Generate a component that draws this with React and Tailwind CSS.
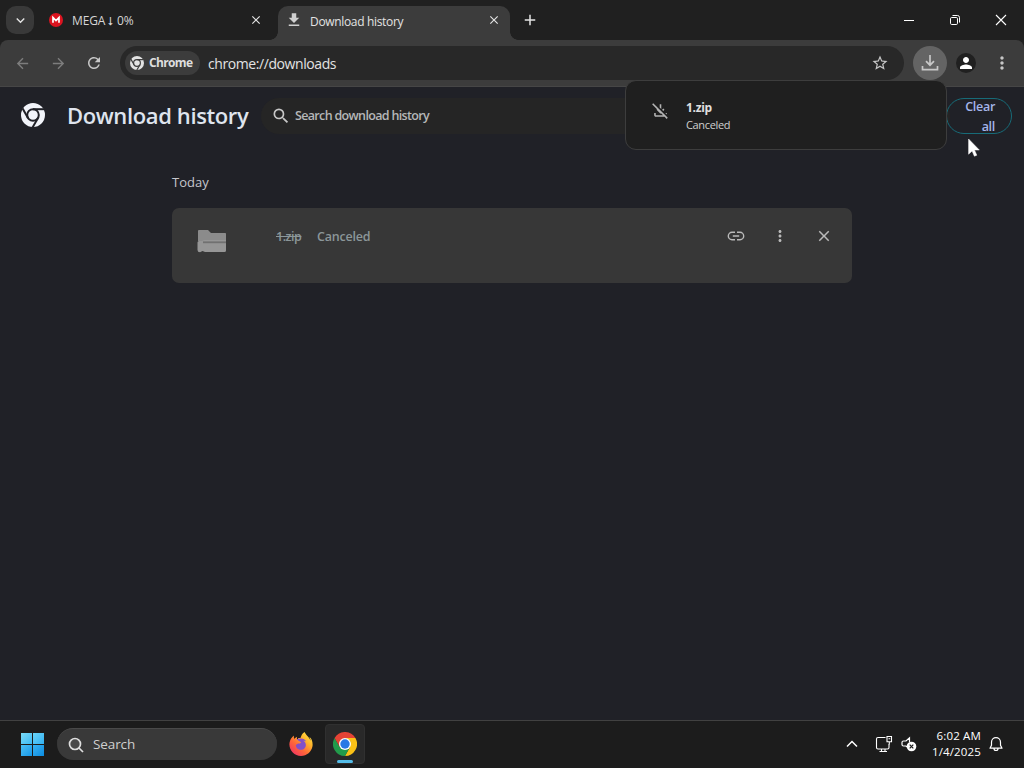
import React from "react";
import {
  MdRefresh, MdArrowBack, MdArrowForward, MdMoreVert, MdSearch, MdStarBorder,
  MdPerson, MdClose, MdAdd, MdKeyboardArrowDown, MdFileDownload, MdOutlineFileDownloadOff,
} from "react-icons/md";
import { SiFirefoxbrowser } from "react-icons/si";

function ChromeMark({ size, color, gap }) {
  return (
    <svg width={size} height={size} viewBox="0 0 24 24" className="shrink-0">
      <circle cx="12" cy="12" r="12" fill={color} />
      <g stroke={gap} strokeWidth="2" fill="none">
        <circle cx="12" cy="12" r="5.8" />
        <path d="M12 6.2h11" />
        <path d="M12 6.2h11" transform="rotate(120 12 12)" />
        <path d="M12 6.2h11" transform="rotate(240 12 12)" />
      </g>
    </svg>
  );
}

function MegaLogo() {
  return (
    <svg width="14" height="14" viewBox="0 0 14 14">
      <circle cx="7" cy="7" r="7" fill="#dc1420" />
      <path d="M4 9.8V4.6l3 3 3-3v5.2" fill="none" stroke="#fff" strokeWidth="1.7" />
    </svg>
  );
}

function TabStrip() {
  return (
    <div className="flex h-10 shrink-0 items-center bg-[#202020] pl-[6px] text-[#e3e3e3]">
      <button className="flex h-7 w-7 items-center justify-center rounded-[10px] bg-[#393939]">
        <MdKeyboardArrowDown size={17} />
      </button>
      <div className="ml-[15px] flex w-[229px] items-center">
        <MegaLogo />
        <span className="ml-[9px] grow whitespace-nowrap pt-[1px] text-[12px] tracking-[-0.15px] text-[#d6d6d6]">MEGA ⭣ 0%</span>
        <MdClose size={14} className="mr-[15px]" />
      </div>
      <div className="relative mt-[6px] flex h-[34px] w-[232px] items-center rounded-t-[10px] bg-[#3c3c3c] pb-[6px] pl-[7px]">
        <span className="absolute -left-2 bottom-0 h-2 w-2 bg-[radial-gradient(circle_at_top_left,#202020_7.5px,#3c3c3c_8px)]" />
        <span className="absolute -right-2 bottom-0 h-2 w-2 bg-[radial-gradient(circle_at_top_right,#202020_7.5px,#3c3c3c_8px)]" />
        <MdFileDownload size={18} className="text-[#d0d0d0]" />
        <span className="ml-[7px] grow whitespace-nowrap pt-[3px] text-[12px] tracking-[-0.33px]">Download history</span>
        <MdClose size={14} className="mr-[9px]" />
      </div>
      <MdAdd size={18} className="ml-[11px]" />
      <div className="ml-auto flex items-center text-white">
        <svg width="46" height="40" viewBox="0 0 46 40" fill="none" stroke="currentColor">
          <path d="M18 20.5h10" />
        </svg>
        <svg width="46" height="40" viewBox="0 0 46 40" fill="none" stroke="currentColor">
          <rect x="18.5" y="17.5" width="7" height="7" rx="1.2" />
          <path d="M20.5 15.5h5a2 2 0 0 1 2 2v5" />
        </svg>
        <svg width="46" height="40" viewBox="0 0 46 40" fill="none" stroke="currentColor" strokeWidth="1.1">
          <path d="M18 15l10 10M28 15l-10 10" />
        </svg>
      </div>
    </div>
  );
}

function Toolbar() {
  return (
    <div className="shrink-0 bg-[#202020]">
      <div className="flex h-[47px] items-center rounded-t-[8px] border-b border-[#464646] bg-[#3c3c3c] pl-[14px] text-[#c7c7c7]">
        <MdArrowBack size={17} className="text-[#7d7d7d]" />
        <MdArrowForward size={17} className="ml-[19px] text-[#7d7d7d]" />
        <MdRefresh size={18} className="ml-[18px]" />
        <div className="ml-[17px] flex h-[34px] w-[784px] items-center rounded-full bg-[#282828] pl-[5px]">
          <div className="flex h-6 w-[75px] items-center rounded-full bg-[#3c3c3c] pl-[5px]">
            <ChromeMark size={14} color="#e3e3e3" gap="#3c3c3c" />
            <span className="ml-[5px] text-[12px] font-bold tracking-[-0.65px] text-[#dedede]">Chrome</span>
          </div>
          <span className="ml-[8px] text-[14px] tracking-[-0.42px] text-[#e3e3e3]">chrome://downloads</span>
          <MdStarBorder size={18} className="ml-auto mr-[15px]" />
        </div>
        <div className="ml-[9px] flex h-[34px] w-[34px] items-center justify-center rounded-full bg-[#646464]">
          <svg width="18" height="18" viewBox="0 0 18 18" fill="none" stroke="currentColor" strokeWidth="1.7">
            <path d="M9 1v10M5 7.2l4 4 4-4M1.5 12v3.7h15V12" />
          </svg>
        </div>
        <div className="ml-[9px] flex h-5 w-5 items-center justify-center rounded-full bg-[#202020]">
          <MdPerson size={18} className="text-white" />
        </div>
        <MdMoreVert size={20} className="ml-[16px]" />
      </div>
    </div>
  );
}

function DownloadPopup() {
  return (
    <div className="absolute left-[625px] top-[-7px] z-10 flex h-[70px] w-[322px] rounded-[11px] border border-[#3d3d3d] bg-[#1f1f1f] pl-[25px] pt-[18px]">
      <MdOutlineFileDownloadOff size={19} className="mt-[2px] text-[#b4b4b4]" />
      <div className="ml-[16px] flex flex-col whitespace-nowrap text-[#e0e0e0]">
        <span className="text-[12px] font-bold leading-[17px] tracking-[-0.3px]">1.zip</span>
        <span className="text-[11px] leading-[18px] tracking-[-0.35px] text-[#cfcfcf]">Canceled</span>
      </div>
    </div>
  );
}

function Cursor() {
  return (
    <svg className="absolute left-[968px] top-[51px] z-20" width="12" height="19" viewBox="0 0 12 19">
      <path d="M.6 1v15.2l3.5-3.3 2.3 5.3 2.4-1-2.3-5.2h4.8z" fill="#fff" stroke="#fff" strokeWidth=".5" />
    </svg>
  );
}

function Page() {
  return (
    <main className="relative flex grow flex-col bg-[#202127]">
      <header className="flex h-[57px] shrink-0 items-center">
        <div className="-mt-[2px] ml-[21px]"><ChromeMark size={24} color="#f2f4fa" gap="#202127" /></div>
        <h1 className="-mt-[1px] ml-[22px] w-[194px] shrink-0 whitespace-nowrap text-[22px] font-semibold leading-8 tracking-[-0.38px] text-[#dfe4ee]">Download history</h1>
        <div className="flex h-[36px] w-[689px] shrink-0 items-center rounded-full bg-[#252525] pl-[10px]">
          <MdSearch size={20} className="text-[#c7c7c7]" />
          <span className="ml-[4px] whitespace-nowrap pt-[2px] text-[12.5px] font-semibold tracking-[-0.66px] text-[#b5b7b8]">Search download history</span>
        </div>
        <button className="-ml-[4px] mt-[1px] h-9 w-[66px] shrink-0 rounded-full border border-[#176b78] pr-[16px] text-right text-[12.5px] font-semibold leading-5 tracking-[-0.3px] text-[#a4b5ea]">
          <span className="-mt-[2px] block">Clear<br />all</span>
        </button>
      </header>
      <DownloadPopup />
      <Cursor />
      <section className="mx-[172px] mt-[28px]">
        <h2 className="text-[13px] leading-5 text-[#c5c6cc]">Today</h2>
        <div className="mt-[16px] flex h-[75px] w-[680px] rounded-[7px] bg-[#373737] pl-[25px]">
          <svg className="mt-[20px]" width="30" height="26" viewBox="0 0 30 26">
            <path d="M1 2.8Q1 2 2 2h9l3 3h14.2q.8 0 .8.8V13H1z" fill="#8b8b8b" />
            <path d="M.5 14.5q0-1.5 1.5-1.5h2.5l3-1H29v10.5q0 1.5-1.5 1.5H8l-2.5-1L3 24.3Q.5 24.3.5 22z" fill="#969696" />
            <path d="M6 13.4h23v1.8H6z" fill="#717171" />
          </svg>
          <div className="ml-[49px] mt-[19px] h-5 w-[41px] whitespace-nowrap text-[12.5px] font-semibold leading-5 tracking-[-0.5px] text-[#8b9699] line-through">1.zip</div>
          <div className="mt-[19px] whitespace-nowrap text-[12.5px] font-semibold leading-5 tracking-[-0.22px] text-[#8b9699]">Canceled</div>
          <div className="ml-auto mr-[19px] mt-[19px] flex h-[18px] items-center gap-[26px] text-[#bababa]">
            <svg width="18" height="18" viewBox="0 0 18 18" fill="none" stroke="currentColor" strokeWidth="1.4">
              <path d="M8 5.3H5a3.7 3.7 0 0 0 0 7.4h3M10 5.3h3a3.7 3.7 0 0 1 0 7.4h-3M5.8 9h6.4" />
            </svg>
            <MdMoreVert size={18} />
            <MdClose size={18} />
          </div>
        </div>
      </section>
    </main>
  );
}

function ChromeLogo() {
  return (
    <svg width="24" height="24" viewBox="0 0 24 24">
      <path d="M22.4 6A12 12 0 0 1 12 24l5-9 .2-6-5.2-3z" fill="#fbc116" />
      <path d="M12 24A12 12 0 0 1 1.6 6l5.2 9 5.2 3 5-3z" fill="#229b4b" />
      <path d="M12 6h10.4A12 12 0 0 0 1.6 6l5.2 9z" fill="#e54335" />
      <circle cx="12" cy="12" r="6" fill="#fff" />
      <circle cx="12" cy="12" r="4.7" fill="#2878e5" />
    </svg>
  );
}

function FirefoxLogo() {
  return (
    <span className="flex h-6 w-6 items-center justify-center rounded-full bg-[radial-gradient(circle_at_50%_52%,#8250c8_38%,transparent_40%)]">
      <svg width="0" height="0" className="absolute">
        <defs>
          <linearGradient id="flame" x1="1" y1="0" x2="0.15" y2="1">
            <stop offset="0" stopColor="#fff04f" />
            <stop offset=".35" stopColor="#ffb52b" />
            <stop offset=".65" stopColor="#ff6738" />
            <stop offset="1" stopColor="#ef2f66" />
          </linearGradient>
        </defs>
      </svg>
      <SiFirefoxbrowser size={24} className="fill-[url(#flame)]" />
    </span>
  );
}

function Taskbar() {
  return (
    <footer className="flex h-12 shrink-0 items-center border-t border-[#414141] bg-[#1c1c1c] pb-[1px] pl-[21px] text-white">
      <div className="grid h-[23px] w-[23px] grid-cols-2 gap-[1px]">
        <span className="bg-linear-to-br from-[#79dcf8] to-[#39b9f4]" />
        <span className="bg-linear-to-br from-[#69d5f8] to-[#2fb0f2]" />
        <span className="bg-linear-to-br from-[#48bff5] to-[#1397e8]" />
        <span className="bg-linear-to-br from-[#36b3f3] to-[#078be0]" />
      </div>
      <div className="ml-[13px] flex h-8 w-[220px] items-center rounded-full border-t border-[#4a4a4a] bg-[#393939] pl-[11px]">
        <svg width="16" height="16" viewBox="0 0 16 16" fill="#494949" stroke="#dedede" strokeWidth="1.7">
          <circle cx="7" cy="7" r="5.5" />
          <path d="m11 11 4 4" />
        </svg>
        <span className="ml-[9px] text-[13.5px] tracking-[-0.1px] text-[#cfcfcf]">Search</span>
      </div>
      <div className="ml-[12px]"><FirefoxLogo /></div>
      <div className="relative ml-[12px] flex h-10 w-10 items-center justify-center rounded-[4px] border border-[#303030] bg-[#292929]">
        <ChromeLogo />
        <span className="absolute bottom-0 h-[3px] w-4 rounded-full bg-[#55bde9]" />
      </div>
      <svg className="ml-auto" width="12" height="12" viewBox="0 0 12 12" fill="none" stroke="currentColor" strokeWidth="1.5">
        <path d="m1 8.5 5-5 5 5" />
      </svg>
      <svg className="ml-[17px]" width="18" height="18" viewBox="0 0 18 18" fill="none" stroke="currentColor" strokeWidth="1.1">
        <path d="M10.5 2.5H3Q1.5 2.5 1.5 4v8.5Q1.5 14 3 14h9.5q1.5 0 1.5-1.5V9M4.5 16.5H12M6.5 14v2.5M10 14v2.5" />
        <path d="M12 1.5h4.5v5.2H12zM14.3 6.7v2.8M13.5 3.8h1.7" />
      </svg>
      <svg className="ml-[8px]" width="16" height="16" viewBox="0 0 16 16" fill="none" stroke="currentColor" strokeWidth="1.2">
        <path d="M8.5 6V1.8L5 5H2.5Q1 5 1 6.5v2Q1 10 2.5 10H5l1 1" />
        <circle cx="10.5" cy="10.5" r="4.8" fill="#fff" stroke="none" />
        <path d="m8.7 8.7 3.6 3.6m0-3.6-3.6 3.6" stroke="#1c1c1c" />
      </svg>
      <div className="ml-[14px] w-[50px] whitespace-nowrap text-right text-[11.5px] leading-4 tracking-[0.15px]">
        <div>6:02 AM</div>
        <div>1/4/2025</div>
      </div>
      <svg className="ml-[8px] mr-[21px]" width="14" height="16" viewBox="0 0 14 16" fill="none" stroke="currentColor" strokeWidth="1.2">
        <path d="M2.5 6.2a4.5 4.5 0 0 1 9 0v3l1.5 3H1l1.5-3zM5 12.5q0 2 2 2t2-2" strokeLinejoin="round" />
      </svg>
    </footer>
  );
}

export default function App() {
  return (
    <div className="flex h-[768px] w-[1024px] flex-col overflow-hidden font-['Open_Sans','Noto_Sans',sans-serif]">
      <TabStrip />
      <Toolbar />
      <Page />
      <Taskbar />
    </div>
  );
}
